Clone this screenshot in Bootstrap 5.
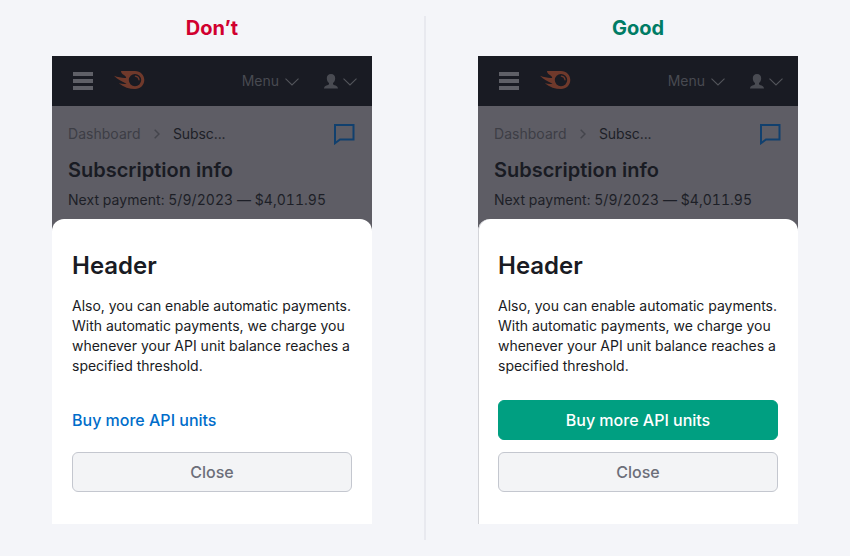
<!DOCTYPE html>
<html lang="en">
<head>
<meta charset="utf-8">
<meta name="viewport" content="width=device-width, initial-scale=1">
<title>Modal on mobile: primary action</title>
<link href="https://cdn.jsdelivr.net/npm/bootstrap@5.3.0/dist/css/bootstrap.min.css" rel="stylesheet">
<style>
body{background:#f4f5f9;font-family:Inter,"Liberation Sans",sans-serif;color:#191b23;font-size:14px;line-height:20px;height:556px;overflow:hidden}
.example{width:424px}
.divider{width:2px;height:524px;margin-top:16px;background:#e8e9ef}
.verdict{font-size:20px;line-height:24px;font-weight:700;margin:16px 0}
.verdict-bad{color:#d1002f}
.verdict-good{color:#007c65}
.phone{width:320px;height:468px;background:#5e5d65}
.topbar{height:50px;background:#191b23;color:#484a51;padding:0 15px 0 21px}
.burger{width:20px;gap:3px}
.burger i{height:4px;background:#5f6067}
.comet{margin:0 0 1px 21px}
.menu-arrow{margin:2px 25px 0 6px}
.person-arrow{margin:2px 0 0 5px}
.crumbs{height:20px;margin-top:18px}
.crumb-link{color:#3d3e45;letter-spacing:.03px}
.crumb-current{color:#1d1f27;letter-spacing:-.1px}
.angle{margin:0 13px 0 13.500px}
.chat{margin-right:1px}
.page-title{font-size:20px;line-height:24px;font-weight:600;margin:14px 0 8px}
.payment{color:#1d1f27;font-variant-numeric:tabular-nums;letter-spacing:.04px}
.sheet{border-radius:12px 12px 0 0;padding:32px 20px;margin-top:9px}
.sheet-lined{box-shadow:inset 1px 0 #d3d4d9}
.sheet-title{font-size:24px;line-height:30px;font-weight:600;margin:0 0 15px}
.sheet-text{margin:0 -10px 24px 0;letter-spacing:-.01px}
.action{height:40px;font-size:16px;line-height:24px;padding:7px 12px;border-radius:6px;font-weight:500}
.action-link{color:#006dca;text-decoration:none}
.action-primary,.action-primary:hover{background:#009f81;color:#fff;border-color:#009f81}
.action-close,.action-close:hover{background:#f3f4f6;border-color:#c4c7cf;color:#6c6e79;margin-top:12px}
</style>
<script src="https://cdn.jsdelivr.net/npm/bootstrap@5.3.0/dist/js/bootstrap.bundle.min.js"></script>
</head>
<body>
<svg class="d-none">
  <symbol id="comet" viewBox="0 0 31 19">
    <path fill="#6f392b" fill-rule="evenodd" d="M7 0H21C26.500 0 30.300 4 30.300 9.100C30.300 14.200 26.300 18.100 21 18.100C15.500 18.100 9.500 16.300 4.800 12.300C8 13 11 13.200 12.500 12.700C8 10.800 3.300 8.300 0 4.800C4.500 6.400 9 7.300 12 6.900C12.600 6.200 11.500 5.100 10.300 4.200C7.800 2.800 7 1.500 7 0ZM21 2.900A6.200 6.200 0 1 0 21 15.300A6.200 6.200 0 1 0 21 2.900Z"/>
    <path fill="none" stroke="#6f392b" stroke-width="1.300" stroke-linecap="round" d="M21.400 5.200A4 4 0 0 1 25 8.800"/>
  </symbol>
  <symbol id="chevron" viewBox="0 0 14 8"><path fill="none" stroke="#53555b" stroke-width="1.100" d="M.5 .7L7 7L13.500 .7"/></symbol>
  <symbol id="person" viewBox="0 0 14 15"><path fill="#494b52" d="M7 0C9.700 0 11.200 1.700 11.200 4.300C11.200 6.500 10.200 8.200 9 9V10.300C9.500 11.300 13.800 11.300 14 14.500H0C.2 11.300 4.500 11.300 5 10.300V9C3.800 8.200 2.800 6.500 2.800 4.300C2.800 1.700 4.300 0 7 0Z"/></symbol>
  <symbol id="angle" viewBox="0 0 6 10"><path fill="none" stroke="#44454c" stroke-width="1.500" d="M.7 .7L5 5L.7 9.300"/></symbol>
  <symbol id="chat" viewBox="0 0 21 21"><path fill="none" stroke="#11406e" stroke-width="2" d="M1 1H19.500V15.500H6L1 19.200Z"/></symbol>
</svg>
<main class="d-flex">
  <section class="example d-flex flex-column align-items-center">
    <h2 class="verdict verdict-bad">Don’t</h2>
    <div class="phone d-flex flex-column">
      <header class="topbar d-flex align-items-center">
        <div class="burger d-flex flex-column"><i></i><i></i><i></i></div>
        <svg class="comet" width="31" height="19"><use href="#comet"/></svg>
        <span class="menu-label ms-auto">Menu</span>
        <svg class="menu-arrow" width="14" height="8"><use href="#chevron"/></svg>
        <svg class="person" width="14" height="15"><use href="#person"/></svg>
        <svg class="person-arrow" width="14" height="8"><use href="#chevron"/></svg>
      </header>
      <div class="px-3">
        <nav class="crumbs d-flex align-items-center">
          <span class="crumb-link">Dashboard</span>
          <svg class="angle" width="6" height="10"><use href="#angle"/></svg>
          <span class="crumb-current">Subsc...</span>
          <svg class="chat ms-auto" width="21" height="21"><use href="#chat"/></svg>
        </nav>
        <h3 class="page-title">Subscription info</h3>
        <div class="payment">Next payment: 5/9/2023 — $4,011.95</div>
      </div>
      <div class="sheet bg-white flex-grow-1 d-flex flex-column">
        <h4 class="sheet-title">Header</h4>
        <p class="sheet-text">Also, you can enable automatic payments.<br>With automatic payments, we charge you<br>whenever your API unit balance reaches a<br>specified threshold.</p>
        <a href="#" class="action action-link px-0 pt-2">Buy more API units</a>
        <button type="button" class="btn action action-close">Close</button>
      </div>
    </div>
  </section>
  <div class="divider"></div>
  <section class="example d-flex flex-column align-items-center">
    <h2 class="verdict verdict-good">Good</h2>
    <div class="phone d-flex flex-column">
      <header class="topbar d-flex align-items-center">
        <div class="burger d-flex flex-column"><i></i><i></i><i></i></div>
        <svg class="comet" width="31" height="19"><use href="#comet"/></svg>
        <span class="menu-label ms-auto">Menu</span>
        <svg class="menu-arrow" width="14" height="8"><use href="#chevron"/></svg>
        <svg class="person" width="14" height="15"><use href="#person"/></svg>
        <svg class="person-arrow" width="14" height="8"><use href="#chevron"/></svg>
      </header>
      <div class="px-3">
        <nav class="crumbs d-flex align-items-center">
          <span class="crumb-link">Dashboard</span>
          <svg class="angle" width="6" height="10"><use href="#angle"/></svg>
          <span class="crumb-current">Subsc...</span>
          <svg class="chat ms-auto" width="21" height="21"><use href="#chat"/></svg>
        </nav>
        <h3 class="page-title">Subscription info</h3>
        <div class="payment">Next payment: 5/9/2023 — $4,011.95</div>
      </div>
      <div class="sheet sheet-lined bg-white flex-grow-1 d-flex flex-column">
        <h4 class="sheet-title">Header</h4>
        <p class="sheet-text">Also, you can enable automatic payments.<br>With automatic payments, we charge you<br>whenever your API unit balance reaches a<br>specified threshold.</p>
        <button type="button" class="btn action action-primary">Buy more API units</button>
        <button type="button" class="btn action action-close">Close</button>
      </div>
    </div>
  </section>
</main>
</body>
</html>
